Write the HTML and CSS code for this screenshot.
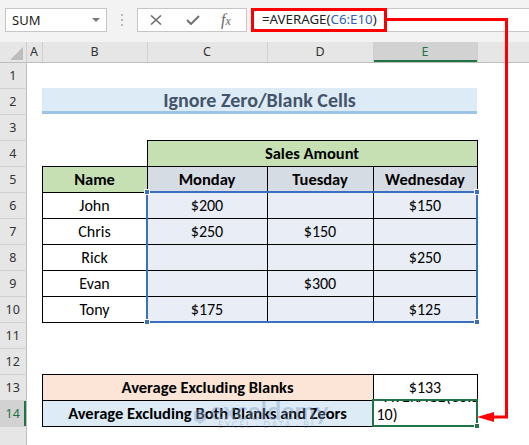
FILE: index.html
```html
<!DOCTYPE html>
<html>
<head>
<meta charset="utf-8">
<link rel="stylesheet" href="styles.css">
</head>
<body>
<div class="app">
  <div class="fbar">
    <div class="namebox"><span>SUM</span><span class="dd"></span></div>
    <div class="grip"><i></i><i></i><i></i></div>
    <div class="btns">
      <svg class="ic-x" width="12" height="10" viewBox="0 0 12 10"><path d="M1 0.5 L11 9.5 M11 0.5 L1 9.5" stroke="#707070" stroke-width="1.6" fill="none"/></svg>
      <svg class="ic-ok" width="14" height="10" viewBox="0 0 14 10"><path d="M1 5 L5 9 L13 1" stroke="#707070" stroke-width="2" fill="none"/></svg>
      <span class="fx"><i>f</i><i class="fxx">x</i></span>
    </div>
    <div class="formula"><div class="hl">=AVERAGE(<span class="ref">C6:E10</span>)</div></div>
  </div>
  <div class="sheet">
    <table class="grid">
      <colgroup>
        <col class="c-rh"><col class="c-a"><col class="c-b"><col class="c-c"><col class="c-d"><col class="c-e"><col class="c-f">
      </colgroup>
      <thead>
        <tr>
          <th class="corner"><svg width="13" height="13" viewBox="0 0 13 13"><path d="M13 0 L13 13 L0 13 Z" fill="#bdbdbd"/></svg></th>
          <th>A</th><th>B</th><th>C</th><th>D</th><th class="hsel">E</th><th></th>
        </tr>
      </thead>
      <tbody>
        <tr><th>1</th><td></td><td></td><td></td><td></td><td></td><td></td></tr>
        <tr><th>2</th><td></td><td colspan="4" class="title">Ignore Zero/Blank Cells</td><td></td></tr>
        <tr><th>3</th><td></td><td></td><td></td><td></td><td></td><td></td></tr>
        <tr><th>4</th><td></td><td></td><td colspan="3" class="b green bold">Sales Amount</td><td></td></tr>
        <tr><th>5</th><td></td><td class="b green bold">Name</td><td class="b hdr bold">Monday</td><td class="b hdr bold">Tuesday</td><td class="b hdr bold">Wednesday</td><td></td></tr>
        <tr><th>6</th><td></td><td class="b">John</td><td class="b tint">$200</td><td class="b tint"></td><td class="b tint">$150</td><td></td></tr>
        <tr><th>7</th><td></td><td class="b">Chris</td><td class="b tint">$250</td><td class="b tint">$150</td><td class="b tint"></td><td></td></tr>
        <tr><th>8</th><td></td><td class="b">Rick</td><td class="b tint"></td><td class="b tint"></td><td class="b tint">$250</td><td></td></tr>
        <tr><th>9</th><td></td><td class="b">Evan</td><td class="b tint"></td><td class="b tint">$300</td><td class="b tint"></td><td></td></tr>
        <tr><th>10</th><td></td><td class="b">Tony</td><td class="b tint">$175</td><td class="b tint"></td><td class="b tint">$125</td><td></td></tr>
        <tr><th>11</th><td></td><td></td><td></td><td></td><td></td><td></td></tr>
        <tr><th>12</th><td></td><td></td><td></td><td></td><td></td><td></td></tr>
        <tr><th>13</th><td></td><td colspan="3" class="b peach bold">Average Excluding Blanks</td><td class="b">$133</td><td></td></tr>
        <tr><th class="rsel">14</th><td></td><td colspan="3" class="b lblue bold">Average Excluding Both Blanks and Zeors</td><td class="b"><div class="wrapcell"><div>=AVERAGE(C6:E<br>10)</div></div></td><td></td></tr>
        <tr><th></th><td></td><td></td><td></td><td></td><td></td><td></td></tr>
      </tbody>
    </table>
    <div class="selbox"></div>
    <span class="h h-tl"></span><span class="h h-tr"></span><span class="h h-bl"></span><span class="h h-br"></span>
    <div class="active"></div>
    <span class="ah"></span>
    <div class="wm">
      <svg width="14" height="18" viewBox="0 0 14 18"><path d="M7 1 L13 5 L13 13 L7 17 L1 13 L1 5 Z" fill="#8aa3c8"/></svg>
      <div class="wmt"><div class="wm1">exceldemy</div><div class="wm2">EXCEL · DATA · BI</div></div>
    </div>
  </div>
  <svg class="arrow" width="529" height="445" viewBox="0 0 529 445">
    <path d="M387 19.5 H506.5 V417 H490" stroke="#ff0000" stroke-width="3" fill="none"/>
    <path d="M477 417 L494 412 L494 422 Z" fill="#ff0000"/>
  </svg>
</div>
</body>
</html>
```
FILE: styles.css
```css
* { box-sizing: border-box; margin: 0; padding: 0; }
html, body { width: 529px; height: 445px; overflow: hidden; background: #fff; }
body { font-family: "Carlito", "Lato", sans-serif; }
.app { position: relative; width: 529px; height: 445px; overflow: hidden; }

/* formula bar */
.fbar { height: 42px; background: #f3f3f3; display: flex; align-items: flex-start; padding: 8px 0 0 5px; }
.namebox { width: 102px; height: 24px; background: #fff; border: 1px solid #c6c6c6; display: flex; align-items: center; justify-content: space-between; padding: 0 6px 0 6px; font-family: "Noto Sans", "Open Sans", sans-serif; font-size: 13px; color: #222; }
.dd { width: 0; height: 0; border-left: 4px solid transparent; border-right: 4px solid transparent; border-top: 4px solid #7a7a7a; }
.grip { width: 30px; height: 24px; display: flex; flex-direction: column; align-items: center; justify-content: center; gap: 3px; }
.grip i { display: block; width: 2px; height: 2px; background: #b8b8b8; }
.btns { width: 110px; height: 24px; background: #fff; border: 1px solid #c6c6c6; display: flex; align-items: center; padding-left: 12px; }
.ic-x { margin-right: 24px; }
.ic-ok { margin-right: 21px; }
.fx { font-family: "Liberation Serif", "DejaVu Serif", serif; font-size: 16px; color: #666; line-height: 16px; }
.fxx { font-size: 12px; }
.formula { flex: 1; height: 24px; margin-left: 4px; background: #fff; border: 1px solid #c6c6c6; border-right: none; display: flex; }
.hl { width: 136px; height: 24px; margin: -1px 0 0 -1px; border: 3px solid #ff0000; padding-left: 8px; font-family: "Noto Sans", "Open Sans", sans-serif; font-size: 13.3px; line-height: 17px; color: #222; white-space: nowrap; }
.ref { color: #2e62c0; }

/* sheet */
.sheet { position: relative; }
.grid { border-collapse: collapse; table-layout: fixed; width: 529px; }
.c-rh { width: 26px; } .c-a { width: 16px; } .c-b { width: 105px; } .c-c { width: 120px; } .c-d { width: 106px; } .c-e { width: 104px; } .c-f { width: 52px; }
.grid th { background: #e6e6e6; font-weight: normal; font-family: "Noto Sans", "Open Sans", sans-serif; font-size: 12.5px; color: #333; padding: 0; }
.grid thead tr { height: 20px; }
.grid thead th { border-right: 1px solid #d0d0d0; border-bottom: 1px solid #bdbdbd; }
.grid tbody tr { height: 26px; }
.grid tbody th { border-right: 1px solid #bdbdbd; border-bottom: 1px solid #d0d0d0; }
.grid th.corner { text-align: right; vertical-align: bottom; padding: 0 3px 2px 0; }
.grid th.corner svg { display: block; margin-left: auto; }
.grid th.hsel { background: #d2d2d2; color: #217346; box-shadow: inset 0 -2px #217346; }
.grid th.rsel { background: #d2d2d2; color: #217346; box-shadow: inset -2px 0 #217346; }
.grid td { padding: 0; text-align: center; font-size: 16px; color: #000; vertical-align: middle; }
.grid td.b { border: 1px solid #000; }
.grid td.bold { font-weight: bold; font-size: 16.5px; }
.grid td.title { background: #ddebf7; box-shadow: inset 0 -3px #9dc3e6; font-weight: bold; font-size: 20px; color: #44546a; padding-bottom: 2px; }
.green { background: #c6e0b4; }
.hdr { background: #d6dce4; }
.tint { background: #e9edf5; }
.peach { background: #fce4d6; }
.lblue { background: #ddebf7; }
.wrapcell { height: 25px; overflow: hidden; display: flex; align-items: flex-end; text-align: left; padding: 0 0 2px 3px; line-height: 18px; font-size: 16px; }

/* overlays */
.selbox { position: absolute; left: 146px; top: 149px; width: 332px; height: 132px; border: 2px solid #3b6fc3; }
.h { position: absolute; width: 6px; height: 6px; background: #3b6fc3; border: 1px solid #fff; }
.h-tl { left: 144px; top: 147px; }
.h-tr { left: 474px; top: 147px; }
.h-bl { left: 144px; top: 277px; }
.h-br { left: 474px; top: 277px; }
.active { position: absolute; left: 372px; top: 357px; width: 106px; height: 28px; border: 2px solid #217346; }
.ah { position: absolute; left: 474px; top: 381px; width: 6px; height: 6px; background: #217346; border: 1px solid #fff; }
.wm { position: absolute; left: 193px; top: 359px; display: flex; align-items: center; gap: 3px; opacity: 0.4; pointer-events: none; }
.wm1 { font-family: "Lato", sans-serif; font-size: 25px; line-height: 19px; color: #7c98c4; font-weight: bold; }
.wm2 { font-family: "Lato", sans-serif; font-size: 9px; line-height: 10px; letter-spacing: 1.5px; color: #8aa0c0; padding-left: 8px; }
.arrow { position: absolute; left: 0; top: 0; pointer-events: none; }
```
